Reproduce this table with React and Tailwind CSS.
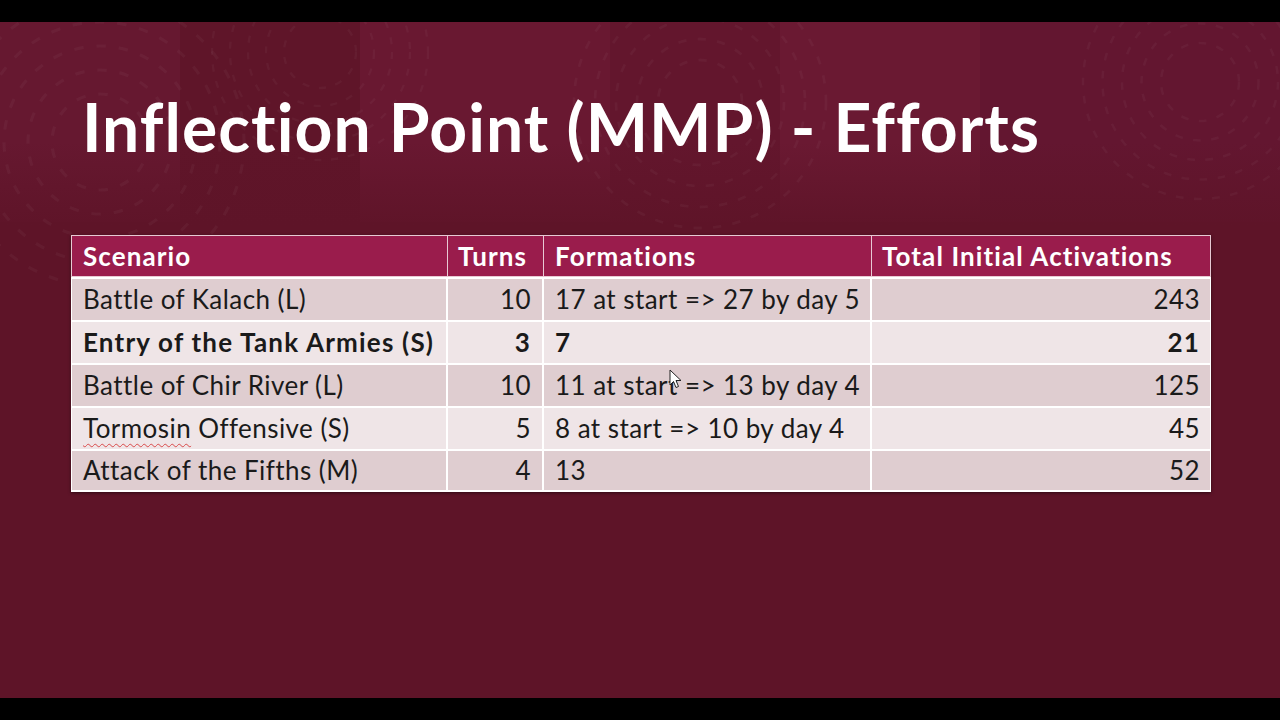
import React from "react";

const rows = [
  { s: "Battle of Kalach (L)", t: "10", f: "17 at start => 27 by day 5", a: "243", bg: "bg-[#dfcdd0]" },
  { s: "Entry of the Tank Armies (S)", t: "3", f: "7", a: "21", bg: "bg-[#efe5e7]", bold: true },
  { s: "Battle of Chir River (L)", t: "10", f: "11 at start => 13 by day 4", a: "125", bg: "bg-[#dfcdd0]" },
  { s: "Tormosin Offensive (S)", t: "5", f: "8 at start => 10 by day 4", a: "45", bg: "bg-[#efe5e7]", spell: true },
  { s: "Attack of the Fifths (M)", t: "4", f: "13", a: "52", bg: "bg-[#dfcdd0]" },
];

function Arcs({ className }) {
  return (
    <svg className={className} viewBox="0 0 200 200" fill="none">
      {[30, 45, 60, 75, 90].map((r) => (
        <circle key={r} cx="100" cy="100" r={r} stroke="#ffffff" strokeOpacity="0.035" strokeWidth="2" strokeDasharray="6 8" />
      ))}
    </svg>
  );
}

export default function App() {
  return (
    <div className="w-[1280px] h-[720px] bg-black flex flex-col" style={{ fontFamily: "Lato, 'Open Sans', sans-serif" }}>
      <div className="h-[22px] shrink-0 bg-black" />
      <div className="relative h-[676px] bg-[#5e1428] overflow-hidden">
        {/* background pattern */}
        <div className="absolute inset-x-0 top-0 h-[200px] flex">
          <div className="w-[180px] bg-[#661830]" />
          <div className="w-[180px] bg-[#5f1529]" />
          <div className="w-[250px] bg-[#691831]" />
          <div className="w-[170px] bg-[#63162d]" />
          <div className="w-[200px] bg-[#6a1932]" />
          <div className="flex-1 bg-[#631630]" />
        </div>
        <div className="absolute inset-x-0 top-[120px] h-[90px] bg-gradient-to-b from-transparent to-[#5e1428]" />
        <Arcs className="absolute -left-[60px] -top-[40px] w-[320px] h-[320px]" />
        <Arcs className="absolute left-[200px] -top-[90px] w-[240px] h-[240px]" />
        <Arcs className="absolute left-[560px] -top-[60px] w-[280px] h-[280px]" />
        <Arcs className="absolute left-[1070px] -top-[70px] w-[260px] h-[260px]" />

        <div className="relative flex flex-col">
          <h1 className="pl-[82px] pt-[65px] h-[165px] text-white font-bold text-[66px] leading-[80px] tracking-[1.05px] whitespace-nowrap">
            Inflection Point (MMP) - Efforts
          </h1>
          <div className="ml-[71px] mt-[48px] w-[1140px] shadow-[0_1px_3px_rgba(0,0,0,0.5)]">
            <div className="grid grid-cols-[376px_96px_328px_340px] h-[42px] bg-[#9a1c4c] border border-[#e8c9d3] text-white font-bold text-[26px] tracking-[1.1px] whitespace-nowrap">
              <div className="px-[11px] flex items-center border-r border-[#e8c9d3]">Scenario</div>
              <div className="px-[10px] flex items-center border-r border-[#e8c9d3]">Turns</div>
              <div className="px-[11px] flex items-center border-r border-[#e8c9d3]">Formations</div>
              <div className="px-[10px] flex items-center">Total Initial Activations</div>
            </div>
            {rows.map((r, i) => (
              <div
                key={i}
                className={`grid grid-cols-[376px_96px_328px_340px] h-[43px] border-x border-t-2 border-white text-[26px] text-[#1a1a1a] ${r.bg} ${r.bold ? "font-bold tracking-[1.2px]" : "font-normal tracking-[0.45px]"} ${i === rows.length - 1 ? "border-b-2" : ""}`}
              >
                <div className="px-[11px] flex items-center border-r-2 border-white whitespace-nowrap">
                  {r.spell ? (
                    <span>
                      <span className="underline decoration-wavy decoration-[#d94a4a] decoration-1 underline-offset-[5px]">Tormosin</span> Offensive (S)
                    </span>
                  ) : (
                    r.s
                  )}
                </div>
                <div className="px-[11px] flex items-center justify-end border-r-2 border-white">{r.t}</div>
                <div className="px-[11px] flex items-center border-r-2 border-white whitespace-nowrap">{r.f}</div>
                <div className="px-[12px] flex items-center justify-end">{r.a}</div>
              </div>
            ))}
          </div>
        </div>

        {/* mouse cursor */}
        <svg className="absolute left-[669px] top-[347px] w-[14px] h-[20px]" viewBox="0 0 14 20">
          <path d="M1 1 L1 16 L4.5 12.5 L7 18.5 L9.5 17.5 L7 11.5 L12 11.5 Z" fill="#ffffff" stroke="#222" strokeWidth="1" strokeLinejoin="round" />
        </svg>
      </div>
      <div className="h-[22px] shrink-0 bg-black" />
    </div>
  );
}
